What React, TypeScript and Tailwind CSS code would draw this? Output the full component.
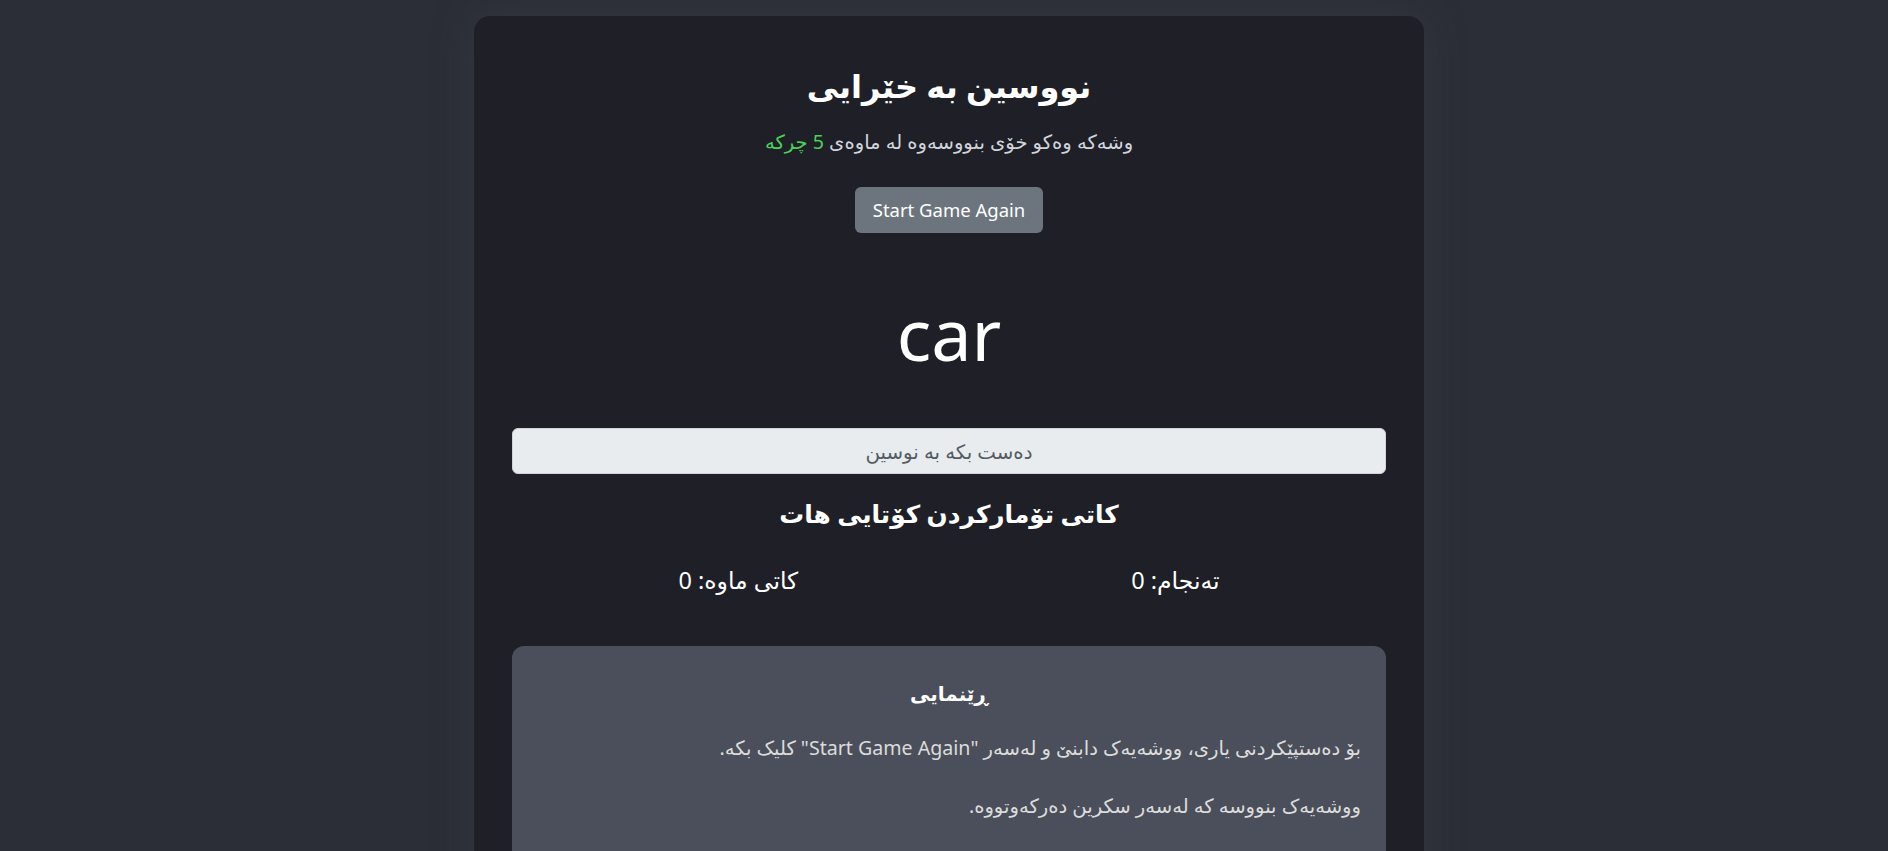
import React, { useState } from 'react';

const App: React.FC = () => {
  const [typed, setTyped] = useState<string>('');
  const score = 0;
  const timeLeft = 0;

  return (
    <div
      dir="rtl"
      className="min-h-screen bg-[#2b2e37] flex justify-center pt-4 pl-[10px]"
      style={{ fontFamily: '"Noto Sans", "DejaVu Sans", sans-serif' }}
    >
      <div className="w-[950px] rounded-2xl bg-[#1e1f27] px-[38px] pt-[51px] pb-10 shadow-[0_0_40px_rgba(70,74,86,0.35)]">
        <h1 className="text-center text-[32px] font-bold leading-[38px] text-white">
          نووسین بە خێرایی
        </h1>
        <p className="mt-[23px] text-center text-[19.6px] leading-[28px] text-[#d1d5db]">
          وشەکە وەکو خۆی بنووسەوە لە ماوەی <span className="text-[#4cd05a]">5 چرکە</span>
        </p>
        <div className="mt-[31px] flex justify-center">
          <button
            type="button"
            dir="ltr"
            className="h-[46px] rounded-md bg-[#6c757d] px-[18px] text-[18.5px] text-white"
          >
            Start Game Again
          </button>
        </div>

        <div dir="ltr" className="mt-[50px] text-center text-[72px] leading-[100px] text-white">
          car
        </div>

        <input
          type="text"
          value={typed}
          onChange={(e) => setTyped(e.target.value)}
          placeholder="دەست بکە بە نوسین"
          className="mt-[45px] block h-[46px] w-full rounded-md border border-[#ced4da] bg-[#e9ecef] px-3 text-center text-[19.8px] text-[#212529] placeholder:text-[#555b62] outline-none"
        />

        <h2 className="mt-[22px] text-center text-[24.8px] font-bold leading-[34px] text-white">
          کاتی تۆمارکردن کۆتایی هات
        </h2>

        <div className="mt-[34px] flex justify-around text-[23.5px] leading-[32px] text-white">
          <span>تەنجام: {score}</span>
          <span>کاتی ماوە: {timeLeft}</span>
        </div>

        <div className="mt-[50px] rounded-xl bg-[#4b4f5b] px-[25px] pt-[34px] pb-[70px]">
          <h3 className="text-center text-[20px] font-bold leading-[28px] text-white">ڕێنمایی</h3>
          <p className="mt-[25px] text-[19.6px] leading-[30px] text-[#dcdcdc]">
            بۆ دەستپێکردنی یاری، ووشەیەک دابنێ و لەسەر "Start Game Again" کلیک بکە.
          </p>
          <p className="mt-[28px] text-[19.6px] leading-[30px] text-[#dcdcdc]">
            ووشەیەک بنووسە کە لەسەر سکرین دەرکەوتووە.
          </p>
        </div>
      </div>
    </div>
  );
};

export default App;
